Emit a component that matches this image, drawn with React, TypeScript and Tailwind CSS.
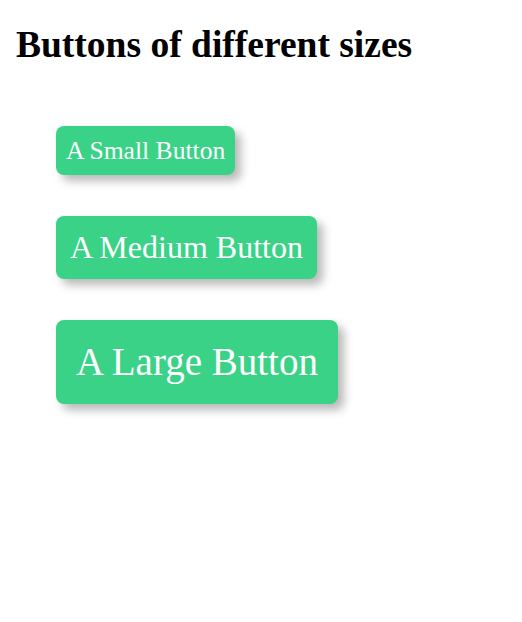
export default function App() {
  return (
    <div className="min-h-screen bg-white px-4 pt-[23px] font-['Liberation_Serif','Times_New_Roman',serif] text-black">
      <h1 className="text-[37.5px] font-bold leading-[44px]">Buttons of different sizes</h1>

      <div className="mt-[59px] flex flex-col items-start gap-[41px] pl-10">
        <button className="rounded-lg bg-[#3ad286] px-[10px] py-[10px] text-[25.6px] leading-[29px] text-white shadow-[6px_6px_10px_rgba(0,0,0,0.28)]">
          A Small Button
        </button>
        <button className="rounded-lg bg-[#3ad286] px-[14px] py-[13px] text-[32px] leading-[37px] text-white shadow-[6px_6px_10px_rgba(0,0,0,0.28)]">
          A Medium Button
        </button>
        <button className="rounded-lg bg-[#3ad286] px-5 py-5 text-[39px] leading-[44px] text-white shadow-[6px_6px_10px_rgba(0,0,0,0.28)]">
          A Large Button
        </button>
      </div>
    </div>
  );
}
